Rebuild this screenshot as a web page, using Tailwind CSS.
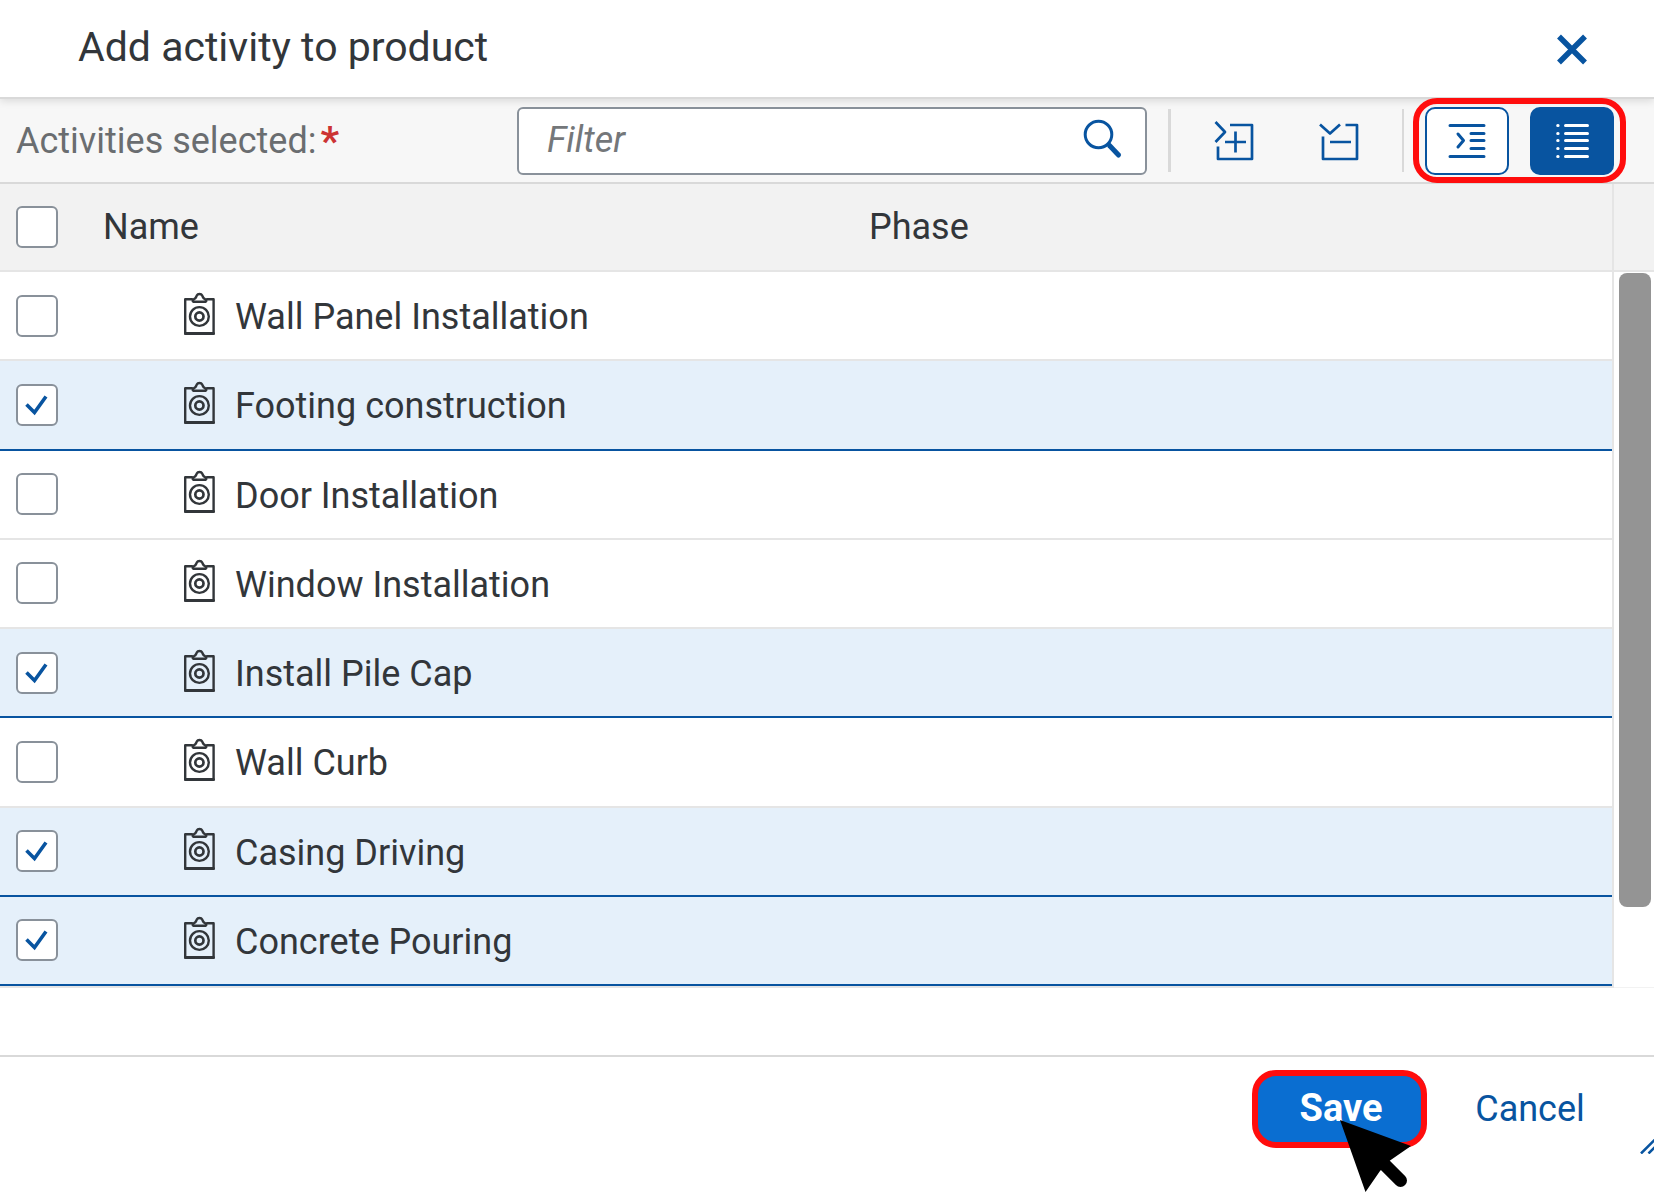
<!DOCTYPE html>
<html lang="en">
<head>
<meta charset="utf-8">
<meta name="viewport" content="width=device-width,initial-scale=1">
<title>Add activity to product</title>
<script src="https://cdn.jsdelivr.net/npm/@tailwindcss/browser@4"></script>
</head>
<body class="min-h-screen flex flex-col bg-white font-[Roboto,'Liberation_Sans',sans-serif] text-[36px] leading-[44px] text-[#32363a] overflow-hidden">

  <!-- Shared icons -->
  <svg class="hidden">
    <symbol id="clipboard" viewBox="0 0 31 43">
      <g fill="none" stroke="currentColor" stroke-linejoin="round" stroke-linecap="round">
        <path stroke-width="2.4" d="M8 7.2H1.2V41.5M23 7.2h6.6V41.5"/>
        <path stroke-width="3" d="M1.5 41.4h28"/>
        <path stroke-width="2.5" d="M9.4 9.8c-1.3-.9-.6-2.300 1-3 1.600-.7 1.500-1.600 2.400-3.300 1-2 4.400-2 5.400 0 .9 1.700.8 2.600 2.400 3.300 1.600.7 2.300 2.100 1 3z"/>
        <circle cx="15.4" cy="24.5" r="9.4" stroke-width="2.4"/>
        <circle cx="15.4" cy="24.5" r="4.1" stroke-width="2.7"/>
      </g>
    </symbol>
  </svg>

  <!-- Title bar -->
  <header class="relative z-10 flex items-center justify-between h-[99px] pl-[78px] pr-10 bg-white border-b-2 border-[#d9d9d9] shadow-[0_2px_8px_rgba(0,0,0,0.12)]">
    <h1 class="text-[41px] pb-1">Add activity to product</h1>
    <button type="button" aria-label="Close" class="flex items-center justify-center w-[84px] h-[68px] text-[#0854a0]">
      <svg class="size-8" viewBox="0 0 32 32" fill="none" stroke="currentColor" stroke-width="5.5">
        <path d="M3 3.5l26 26M29 3.5l-26 26"/>
      </svg>
    </button>
  </header>

  <!-- Toolbar -->
  <div class="flex items-center gap-[21px] h-[85px] pl-4 pr-10 bg-[#f7f7f7] border-b-2 border-[#d9d9d9]">
    <label for="filter" class="flex gap-1 w-[480px] shrink-0 text-[#6a6d70]">Activities selected:<span class="text-[41px] font-bold text-[#cc3333]">*</span></label>
    <div class="relative flex-1">
      <input id="filter" type="text" placeholder="Filter" class="block w-full h-[68px] pl-7 pr-20 pb-0.5 bg-white border-2 border-[#89919a] rounded-md outline-none placeholder:italic placeholder:text-[#74777a]">
      <svg class="absolute right-6 top-3 size-10 text-[#0854a0]" viewBox="0 0 40 40" fill="none" stroke="currentColor" stroke-linecap="round">
        <circle cx="15.5" cy="15.5" r="13.3" stroke-width="3"/>
        <path stroke-width="5" d="M26.5 26.500l9 9.500"/>
      </svg>
    </div>
    <span class="w-[3px] h-[63px] bg-[#d9d9d9]"></span>
    <button type="button" aria-label="Expand all" class="flex items-center justify-center w-[84px] h-[68px] text-[#0854a0]">
      <svg class="size-10" viewBox="0 0 40 40" fill="none" stroke="currentColor" stroke-width="2.7" stroke-linejoin="round">
        <path d="M1.500 1l9.500 10-9.500 10M16 4h22v34H4V25.500M11 21h21M21.500 10.500v21"/>
      </svg>
    </button>
    <button type="button" aria-label="Collapse all" class="flex items-center justify-center w-[84px] h-[68px] text-[#0854a0]">
      <svg class="size-10" viewBox="0 0 40 40" fill="none" stroke="currentColor" stroke-width="2.7" stroke-linejoin="round">
        <path d="M1 3.500l10 9L21 3.500M26.500 4H38v34H4V15.500M11 21h21"/>
      </svg>
    </button>
    <span class="w-[2px] h-[63px] bg-[#d9d9d9]"></span>
    <div class="relative z-20 flex gap-[21px]">
      <button type="button" aria-label="Tree view" class="flex items-center justify-center w-[84px] h-[68px] bg-white border-2 border-[#0854a0] rounded-[10px] text-[#0854a0]">
        <svg class="size-10" viewBox="0 0 40 40" fill="none" stroke="currentColor" stroke-width="3" stroke-linecap="round" stroke-linejoin="round">
          <path d="M3 4.500h34M24 12.500h13M24 19.500h13M24 27.500h13M3 35.500h34M11 13l5.500 6.500-5.500 6.500"/>
        </svg>
      </button>
      <button type="button" aria-label="List view" aria-pressed="true" class="flex items-center justify-center w-[84px] h-[68px] bg-[#0854a0] rounded-[10px] text-white">
        <svg class="size-10" viewBox="0 0 40 40" fill="none" stroke="currentColor" stroke-width="3" stroke-linecap="round">
          <path d="M13.500 4.500h22M13.500 12.500h22M13.500 19.500h22M13.500 27.500h22M13.500 35.500h22M5.700 4.500h.4M5.700 12.500h.4M5.700 19.500h.4M5.700 27.500h.4M5.700 35.500h.4"/>
        </svg>
      </button>
      <span class="absolute -inset-x-3 -top-[9px] -bottom-2 border-6 border-[#ff0d0d] rounded-3xl pointer-events-none"></span>
    </div>
  </div>

  <!-- Activity list -->
  <main class="flex">
    <div class="flex-1 border-r-2 border-b-2 border-[#e5e5e5]">
      <table class="w-full h-[802px] table-fixed border-separate border-spacing-0 text-left">
        <thead class="bg-[#f2f2f2]">
          <tr class="h-[88px]">
            <th class="w-[103px] p-0 pl-4 border-b-2 border-[#e5e5e5]">
              <input type="checkbox" aria-label="Select all" class="block size-[42px] appearance-none bg-white border-2 border-[#89919a] rounded-md">
            </th>
            <th class="w-[766px] p-0 font-normal border-b-2 border-[#e5e5e5]">Name</th>
            <th class="p-0 font-normal border-b-2 border-[#e5e5e5]">Phase</th>
          </tr>
        </thead>
        <tbody id="rows"></tbody>
      </table>
    </div>
    <!-- Scrollbar -->
    <div class="flex flex-col w-10">
      <div class="h-[88px] bg-[#f2f2f2] border-b-2 border-[#e5e5e5]"></div>
      <div class="flex-1 pt-px pl-[5px] pr-[3px] border-b border-[#f2f2f2]">
        <div class="h-[634px] rounded-lg bg-[#949494]"></div>
      </div>
    </div>
  </main>

  <!-- Footer -->
  <footer class="relative mt-auto flex justify-end gap-[21px] h-[145px] pt-[17px] pr-10 border-t-2 border-[#d9d9d9]">
    <button type="button" class="relative w-[168px] h-[68px] rounded-[14px] bg-[#0a6ed1] text-[38px] font-bold text-white">
      Save
      <span class="absolute -left-[5px] -right-0.5 -top-1 -bottom-1.5 border-6 border-[#ff0d0d] rounded-3xl pointer-events-none"></span>
      <!-- Pointer -->
      <svg class="absolute left-[83px] top-[46px] w-[72px] h-[73px] text-black pointer-events-none" viewBox="0 0 72 73">
        <path fill="currentColor" d="M0 0l71 26-21 14.500-10 10.500-14.500 21z"/>
        <path stroke="currentColor" stroke-width="13" stroke-linecap="round" d="M42 42l18.500 18.500"/>
      </svg>
    </button>
    <button type="button" class="w-[168px] h-[68px] pt-0.5 text-[#0854a0]">Cancel</button>
    <svg class="absolute right-0 top-[82px] w-[14px] h-[15px] text-[#0854a0]" viewBox="0 0 14 15" fill="none" stroke="currentColor" stroke-width="2.500">
      <path d="M1 14.500l14-14M8.500 14.500l8-8"/>
    </svg>
  </footer>

<script>
  const activities = [
    ['Wall Panel Installation', false],
    ['Footing construction', true],
    ['Door Installation', false],
    ['Window Installation', false],
    ['Install Pile Cap', true],
    ['Wall Curb', false],
    ['Casing Driving', true],
    ['Concrete Pouring', true],
  ];

  document.getElementById('rows').innerHTML = activities.map(([name, on], i) => `
    <tr class="group h-[89px] has-checked:bg-[#e5f0fa]">
      <td class="p-0 pl-4 border-b-2 border-[#e5e5e5] group-has-checked:border-[#0854a0]">
        <div class="grid size-[42px]">
          <input id="act${i}" type="checkbox" ${on ? 'checked' : ''} class="peer col-start-1 row-start-1 appearance-none bg-white border-2 border-[#89919a] rounded-md">
          <svg class="hidden peer-checked:block col-start-1 row-start-1 size-[42px] text-[#0854a0] pointer-events-none" viewBox="0 0 42 42" fill="none" stroke="currentColor" stroke-width="3.600">
            <path d="M10.500 20.500l8 8L30 12.500"/>
          </svg>
        </div>
      </td>
      <td class="p-0 border-b-2 border-[#e5e5e5] group-has-checked:border-[#0854a0]">
        <label for="act${i}" class="flex items-center gap-5 pt-[3px] pl-[81px]">
          <svg class="w-[31px] h-[43px] mb-2"><use href="#clipboard"/></svg>${name}
        </label>
      </td>
      <td class="p-0 border-b-2 border-[#e5e5e5] group-has-checked:border-[#0854a0]"></td>
    </tr>`).join('');
</script>
</body>
</html>
